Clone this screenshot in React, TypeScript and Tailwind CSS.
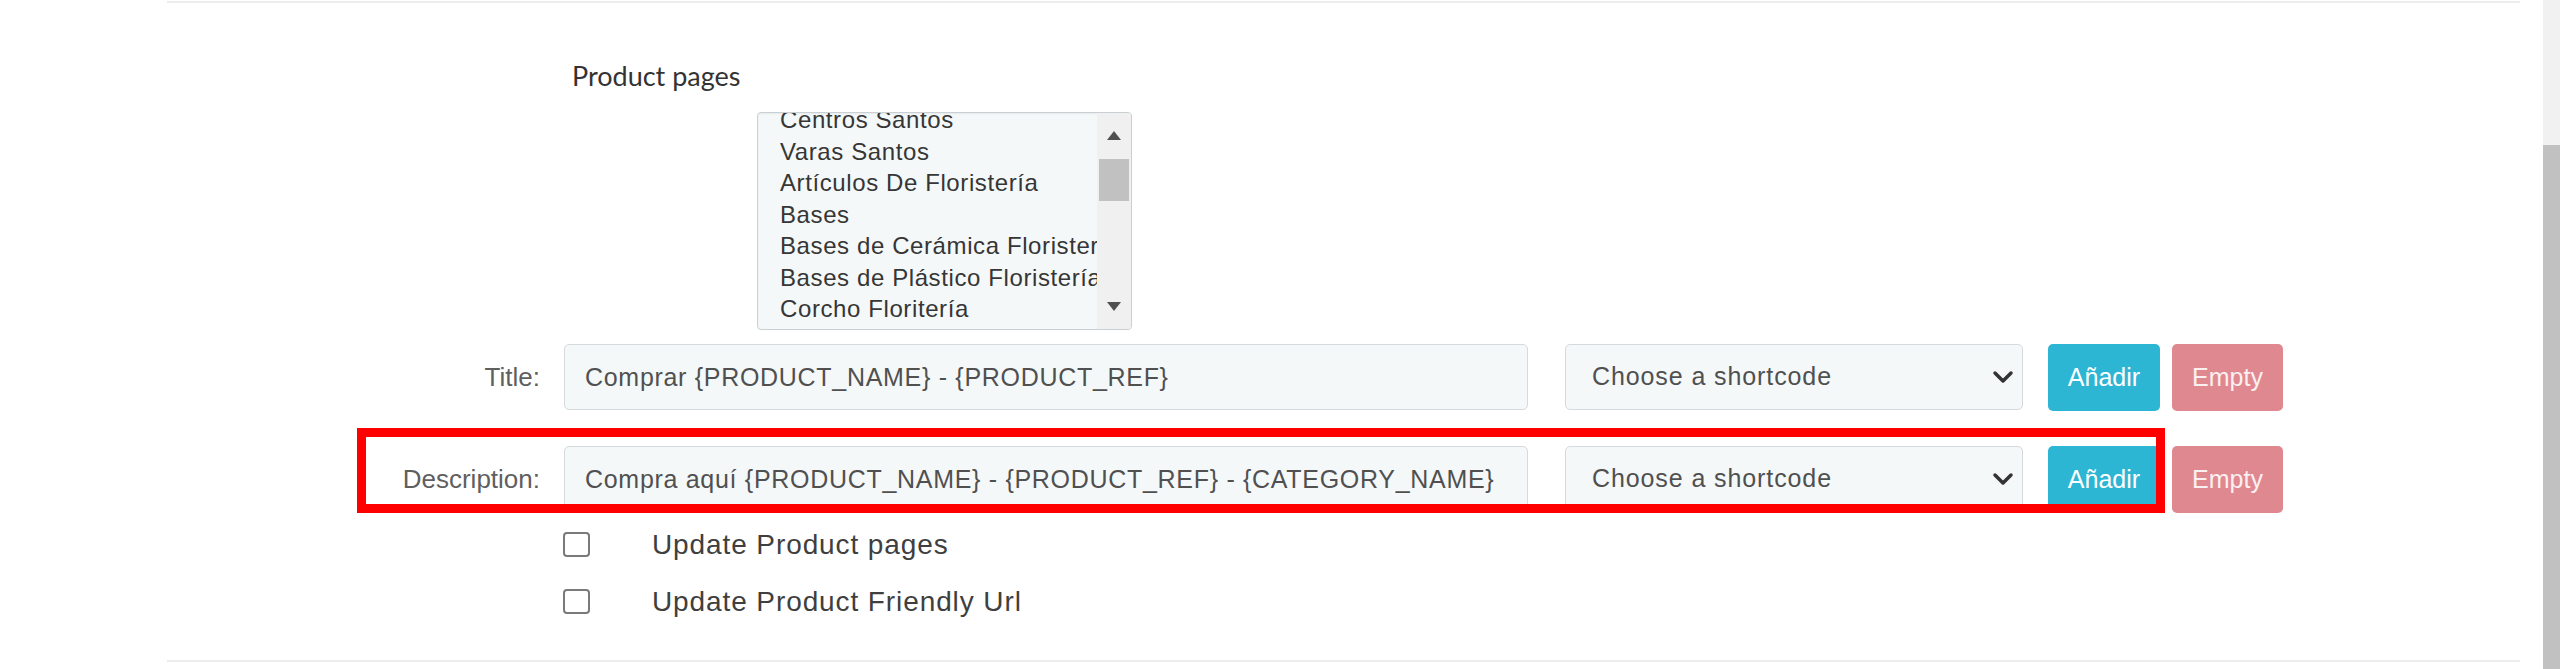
import React from "react";

const categories = [
  "Centros Santos",
  "Varas Santos",
  "Artículos De Floristería",
  "Bases",
  "Bases de Cerámica Floristería",
  "Bases de Plástico Floristería",
  "Corcho Floritería",
  "Esponjas Floristería",
];

const arial = { fontFamily: '"Liberation Sans", Arial, sans-serif' };

function ShortcodeRow({ label, value }: { label: string; value: string }) {
  return (
    <div className="flex items-start">
      <label className="w-[373px] pt-[18px] text-right text-[26px] leading-[30px] text-[#5f5f5f]" style={arial}>
        {label}
      </label>
      <input
        readOnly
        value={value}
        className="ml-[24px] h-[66px] w-[964px] rounded-[5px] border border-[#d5dadd] bg-[#f5f8f9] px-[20px] text-[25px] tracking-[0.7px] text-[#505050] outline-none"
        style={arial}
      />
      <div className="relative ml-[37px] flex h-[66px] w-[458px] items-center rounded-[5px] border border-[#d5dadd] bg-[#f5f8f9] pl-[26px]">
        <span className="text-[25px] tracking-[0.9px] text-[#505050]" style={arial}>
          Choose a shortcode
        </span>
        <svg className="absolute right-[8px] top-1/2 -translate-y-1/2" width="22" height="14" viewBox="0 0 22 14">
          <polyline points="3,3 11,11 19,3" fill="none" stroke="#333" strokeWidth="3.5" strokeLinecap="round" strokeLinejoin="round" />
        </svg>
      </div>
      <button
        className="ml-[25px] h-[67px] w-[112px] rounded-[5px] bg-[#2db5d4] text-[25px] text-white"
        style={arial}
      >
        Añadir
      </button>
      <button
        className="ml-[12px] h-[67px] w-[111px] rounded-[5px] bg-[#e0888f] text-[25px] text-[#fbf0f1]"
        style={arial}
      >
        Empty
      </button>
    </div>
  );
}

function CheckRow({ label }: { label: string }) {
  return (
    <label className="flex h-[57px] items-center">
      <span className="ml-[396px] h-[25px] w-[27px] rounded-[4px] border-2 border-[#7a7a7a] bg-white" />
      <span className="ml-[62px] text-[28px] tracking-[0.9px] text-[#3f3f3f]" style={arial}>
        {label}
      </span>
    </label>
  );
}

export default function App() {
  return (
    <div className="flex h-[669px] w-full overflow-hidden bg-white">
      <div className="flex-1 pl-[167px] pr-[23px] pt-px">
        <div className="relative h-[661px] border-y-2 border-[#ececec]">
          <div
            className="ml-[405px] mt-[56px] h-[34px] text-[27px] leading-[34px] text-[#333]"
            style={{ fontFamily: 'Lato, "Open Sans", sans-serif' }}
          >
            Product pages
          </div>

          {/* category list box */}
          <div className="ml-[590px] mt-[19px] flex h-[218px] w-[375px] overflow-hidden rounded-[4px] border border-[#c9cfd2] bg-[#f5f8f9] shadow-[inset_0_1px_2px_rgba(0,0,0,0.06)]">
            <div className="flex-1 overflow-hidden pl-[22px]">
              <ul className="-mt-[9px] whitespace-nowrap text-[24px] leading-[31.5px] tracking-[0.6px] text-[#363636]" style={arial}>
                {categories.map((c) => (
                  <li key={c}>{c}</li>
                ))}
              </ul>
            </div>
            <div className="flex w-[34px] flex-col items-center bg-[#f0f0f0]">
              <svg className="mt-[18px]" width="14" height="9" viewBox="0 0 14 9">
                <polygon points="7,0 14,9 0,9" fill="#505050" />
              </svg>
              <div className="mt-[19px] h-[42px] w-[30px] bg-[#c1c1c1]" />
              <svg className="mt-auto mb-[18px]" width="14" height="9" viewBox="0 0 14 9">
                <polygon points="0,0 14,0 7,9" fill="#505050" />
              </svg>
            </div>
          </div>

          <div className="mt-[14px]">
            <ShortcodeRow label="Title:" value="Comprar {PRODUCT_NAME} - {PRODUCT_REF}" />
          </div>
          <div className="mt-[35px]">
            <ShortcodeRow label="Description:" value="Compra aquí {PRODUCT_NAME} - {PRODUCT_REF} - {CATEGORY_NAME}" />
          </div>

          <div className="mt-[3px]">
            <CheckRow label="Update Product pages" />
            <CheckRow label="Update Product Friendly Url" />
          </div>

          {/* highlight annotation */}
          <div className="pointer-events-none absolute left-[190px] top-[425px] h-[85px] w-[1808px] border-[9px] border-[#ff0000]" />
        </div>
      </div>
      <div className="flex w-[17px] flex-col">
        <div className="h-[145px] bg-[#f1f1f1]" />
        <div className="flex-1 bg-[#c1c1c1]" />
      </div>
    </div>
  );
}
